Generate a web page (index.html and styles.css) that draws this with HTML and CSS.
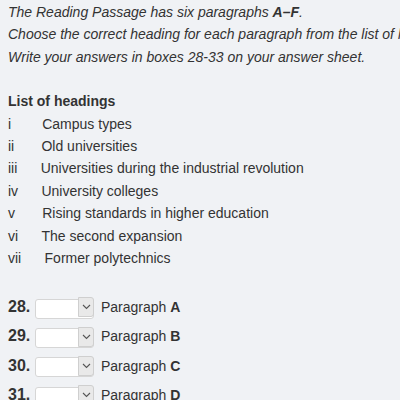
FILE: index.html
```html
<!doctype html>
<html lang="en">

<head>
  <meta charset="UTF-8" />
  <meta name="viewport" content="width=device-width, initial-scale=1.0" />
  <title>Reading Passage - Matching Headings</title>
  <link rel="stylesheet" href="styles.css">
</head>

<body>
  <div class="container">
    <div class="instructions">
      <p><em>The Reading Passage has six paragraphs <strong>A–F</strong>.</em></p>
      <p><em>Choose the correct heading for each paragraph from the list of headings below.</em></p>
      <p><em>Write your answers in boxes 28-33 on your answer sheet.</em></p>
    </div>

    <div class="headings">
      <p class="headings-title">List of headings</p>
      <p>i&nbsp;&nbsp;&nbsp;&nbsp;&nbsp;&nbsp;&nbsp;&nbsp;Campus types</p>
      <p>ii&nbsp;&nbsp;&nbsp;&nbsp;&nbsp;&nbsp;&nbsp;Old universities</p>
      <p>iii&nbsp;&nbsp;&nbsp;&nbsp;&nbsp;&nbsp;Universities during the industrial revolution</p>
      <p>iv&nbsp;&nbsp;&nbsp;&nbsp;&nbsp;&nbsp;University colleges</p>
      <p>v&nbsp;&nbsp;&nbsp;&nbsp;&nbsp;&nbsp;&nbsp;Rising standards in higher education</p>
      <p>vi&nbsp;&nbsp;&nbsp;&nbsp;&nbsp;&nbsp;The second expansion</p>
      <p>vii&nbsp;&nbsp;&nbsp;&nbsp;&nbsp;&nbsp;Former polytechnics</p>
    </div>

    <div class="questions">
      <div class="question">
        <span class="q-num">28.</span>
        <span class="select-wrap">
          <select class="answer" name="q28"><option value=""></option></select>
          <span class="select-arrow"><svg width="9" height="6" viewBox="0 0 9 6"><path d="M1 1l3.5 3.5L8 1" fill="none" stroke="#555" stroke-width="1.1" /></svg></span>
        </span>
        <span class="q-label">Paragraph <strong>A</strong></span>
      </div>
      <div class="question">
        <span class="q-num">29.</span>
        <span class="select-wrap">
          <select class="answer" name="q29"><option value=""></option></select>
          <span class="select-arrow"><svg width="9" height="6" viewBox="0 0 9 6"><path d="M1 1l3.5 3.5L8 1" fill="none" stroke="#555" stroke-width="1.1" /></svg></span>
        </span>
        <span class="q-label">Paragraph <strong>B</strong></span>
      </div>
      <div class="question">
        <span class="q-num">30.</span>
        <span class="select-wrap">
          <select class="answer" name="q30"><option value=""></option></select>
          <span class="select-arrow"><svg width="9" height="6" viewBox="0 0 9 6"><path d="M1 1l3.5 3.5L8 1" fill="none" stroke="#555" stroke-width="1.1" /></svg></span>
        </span>
        <span class="q-label">Paragraph <strong>C</strong></span>
      </div>
      <div class="question">
        <span class="q-num">31.</span>
        <span class="select-wrap">
          <select class="answer" name="q31"><option value=""></option></select>
          <span class="select-arrow"><svg width="9" height="6" viewBox="0 0 9 6"><path d="M1 1l3.5 3.5L8 1" fill="none" stroke="#555" stroke-width="1.1" /></svg></span>
        </span>
        <span class="q-label">Paragraph <strong>D</strong></span>
      </div>
    </div>
  </div>
</body>

</html>
```

FILE: styles.css
```css
body {
  font-family: 'Liberation Sans', Arial, sans-serif;
  background-color: #f0f2f5;
  color: #333;
  margin: 0;
  font-size: 14px;
  line-height: 22.4px;
  overflow: hidden;
}

.container {
  padding: 1px 8px 0;
  white-space: nowrap;
}

p {
  margin: 0;
}

.instructions {
  margin-bottom: 22px;
}

.headings-title {
  font-weight: bold;
}

.questions {
  margin-top: 23px;
}

.question {
  display: flex;
  align-items: center;
  height: 29.4px;
}

.q-num {
  font-weight: bold;
  font-size: 16px;
  width: 27px;
}

.select-wrap {
  position: relative;
  display: inline-block;
  width: 59px;
  height: 20px;
  margin-right: 7px;
}

.answer {
  appearance: none;
  width: 100%;
  height: 100%;
  margin: 0;
  border: 1px solid #d6d6d6;
  border-radius: 3px;
  background-color: #ffffff;
}

.select-arrow {
  position: absolute;
  top: 0;
  right: 0;
  width: 16px;
  height: 20px;
  box-sizing: border-box;
  display: flex;
  align-items: center;
  justify-content: center;
  background-color: #e9e9e9;
  border: 1px solid #cfcfcf;
  border-radius: 0 3px 3px 0;
}
```
